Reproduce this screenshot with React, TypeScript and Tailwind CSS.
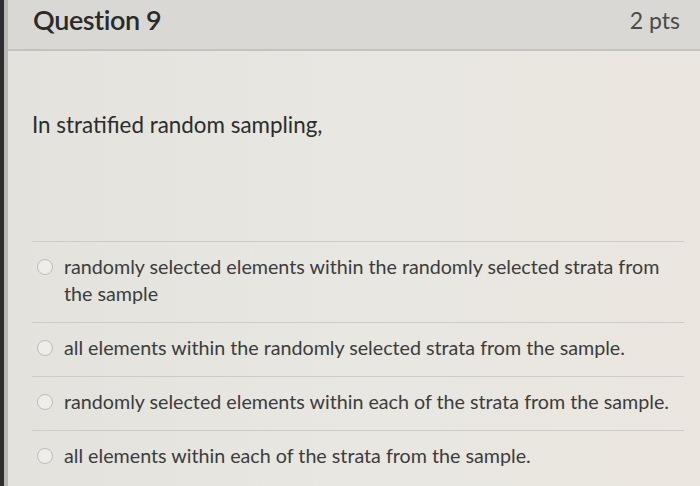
import React from "react";

const answers = [
  "randomly selected elements within the randomly selected strata from the sample",
  "all elements within the randomly selected strata from the sample.",
  "randomly selected elements within each of the strata from the sample.",
  "all elements within each of the strata from the sample.",
];

export default function App() {
  return (
    <div
      className="flex h-[486px] w-[700px] overflow-hidden bg-[#e4e3de]"
      style={{ fontFamily: "Lato, 'Open Sans', sans-serif" }}
    >
      {/* left edge of screen */}
      <div className="w-[4px] bg-[#2e2e30]" />
      <div className="w-[4px] bg-[#b9b8b4]" />

      <div className="flex flex-1 flex-col">
        {/* Header */}
        <div className="flex h-[51px] items-center justify-between border-b-2 border-[#c4c3c0] bg-[#d9d8d5] pb-[9px] pl-[25px] pr-[20px]">
          <h2 className="text-[27px] font-semibold tracking-[-0.4px] text-[#2a2a2a]">Question 9</h2>
          <span className="text-[23px] text-[#4a4a4a]">2 pts</span>
        </div>

        {/* Body */}
        <div className="flex flex-1 flex-col bg-gradient-to-r from-[#e3e2dd] via-[#e8e7e2] to-[#ebe6df] pl-[24px] pr-[14px]">
          <p className="mt-[57px] text-[22.4px] leading-[33px] text-[#2c2c2c]">In stratified random sampling,</p>

          <div className="mt-[100px] mr-[2px] border-t border-[#cdccc8]">
            {answers.map((a, i) => (
              <div
                key={i}
                className={
                  "flex items-start gap-[11px] pl-[5px] pt-[11px] pb-[15px] " +
                  (i < answers.length - 1 ? "border-b border-[#cdccc8]" : "")
                }
              >
                <span className="mt-[6px] h-[16px] w-[16px] shrink-0 rounded-full border border-[#bdbcb8] bg-[#eeede9]" />
                <span className="text-[19.7px] leading-[27px] text-[#3c3c3c]">{a}</span>
              </div>
            ))}
          </div>
        </div>
      </div>
    </div>
  );
}
